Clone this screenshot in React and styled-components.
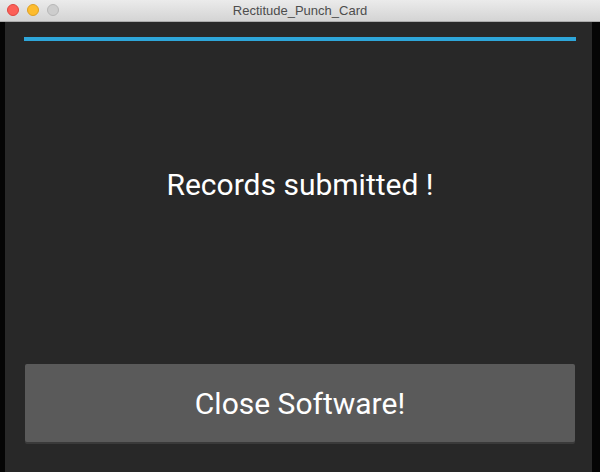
import React from 'react';
import styled, { createGlobalStyle } from 'styled-components';

const GlobalStyle = createGlobalStyle`
  html, body {
    margin: 0;
    padding: 0;
    background: #282828;
  }
  * {
    box-sizing: border-box;
  }
`;

export default function App() {
  return (
    <Window>
      <GlobalStyle />
      <TitleBar>
        <Lights>
          <Light color="#fc5f57" border="#de4640" />
          <Light color="#fdbc2e" border="#dea022" />
          <Light color="#cdcdcd" border="#b7b7b7" />
        </Lights>
        <Title>Rectitude_Punch_Card</Title>
      </TitleBar>
      <Body>
        <SideStrip width={5} />
        <Content>
          <ProgressLine />
          <Message>Records submitted !</Message>
          <CloseButton type="button">Close Software!</CloseButton>
        </Content>
        <SideStrip width={8} />
      </Body>
    </Window>
  );
}

const Window = styled.div`
  width: 600px;
  height: 472px;
  display: flex;
  flex-direction: column;
  background: #282828;
  overflow: hidden;
  font-family: Roboto, "Liberation Sans", sans-serif;
`;

const TitleBar = styled.div`
  position: relative;
  height: 22px;
  flex-shrink: 0;
  display: flex;
  align-items: center;
  justify-content: center;
  background: linear-gradient(#ebebeb, #d4d4d4);
  border-bottom: 1px solid #ababab;
`;

const Lights = styled.div`
  position: absolute;
  left: 7px;
  top: 4px;
  display: flex;
  gap: 8px;
`;

const Light = styled.span`
  width: 12px;
  height: 12px;
  border-radius: 50%;
  background: ${p => p.color};
  border: 1px solid ${p => p.border};
`;

const Title = styled.div`
  font-family: "Liberation Sans", "Helvetica Neue", sans-serif;
  font-size: 13px;
  color: #4d4d4d;
`;

const Body = styled.div`
  flex: 1;
  display: flex;
`;

const SideStrip = styled.div`
  width: ${p => p.width}px;
  flex-shrink: 0;
  background: #050505;
`;

const Content = styled.div`
  flex: 1;
  display: flex;
  flex-direction: column;
  padding: 15px 16px 30px 19px;
`;

const ProgressLine = styled.div`
  height: 4px;
  background: #2ea6d9;
`;

const Message = styled.div`
  flex: 1;
  display: flex;
  align-items: center;
  justify-content: center;
  padding-bottom: 36px;
  font-size: 30px;
  color: #ffffff;
`;

const CloseButton = styled.button`
  margin: 0 1px 0 1px;
  height: 78px;
  border: none;
  border-radius: 2px;
  background: #5a5a5a;
  box-shadow: 0 2px 0 #3a3a3a;
  color: #ffffff;
  font-family: Roboto, "Liberation Sans", sans-serif;
  font-size: 30px;
  cursor: pointer;
`;
